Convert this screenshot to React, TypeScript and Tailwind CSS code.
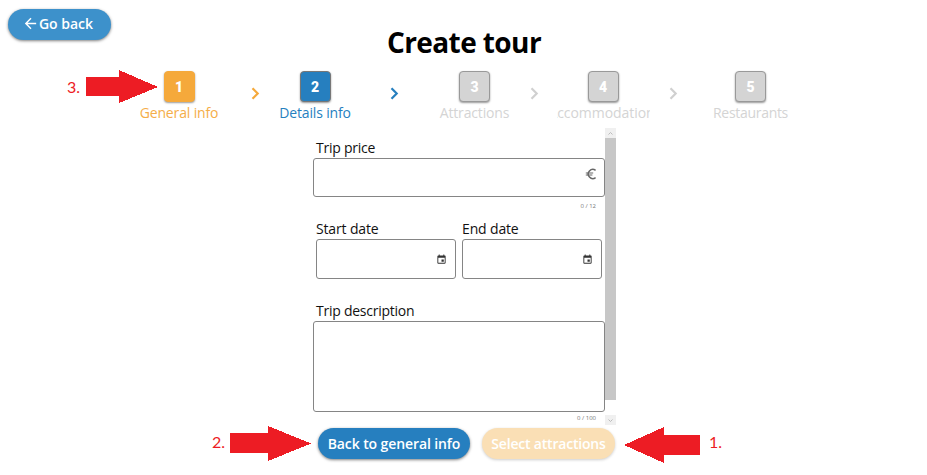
import { MdArrowBack, MdEvent } from "react-icons/md";

function Arrow({ points, className }: { points: string; className: string }) {
  return (
    <svg className={`shrink-0 ${className}`} fill="#ed1c24" shapeRendering="crispEdges">
      <polygon points={points} />
    </svg>
  );
}

function Step({ n, label, box, text, className = "" }: { n: number; label: string; box: string; text: string; className?: string }) {
  return (
    <div className={`flex w-[93px] shrink-0 flex-col items-center overflow-hidden ${className}`}>
      <div className={`mt-px flex h-[31px] w-[31px] shrink-0 items-center justify-center rounded-[4px] border pt-[2px] font-['Roboto',sans-serif] text-[14px] font-black text-white shadow-[0_1px_2px_rgba(0,0,0,0.4)] ${box}`}>
        {n}
      </div>
      <div className={`mt-px h-5 whitespace-nowrap text-[14px] leading-5 ${text}`}>{label}</div>
    </div>
  );
}

function Chevron({ className }: { className: string }) {
  return (
    <svg viewBox="0 0 20 20" fill="none" stroke="currentColor" strokeWidth="2.2" className={`mt-[13px] h-5 w-5 shrink-0 ${className}`}>
      <path d="M7.5 5.2l5.2 5.3-5.2 5.3" />
    </svg>
  );
}

function EuroIcon() {
  return (
    <svg viewBox="0 0 12 12" fill="none" stroke="#666" strokeWidth="1.5" className="h-3 w-3">
      <path d="M10.6 2.3A4.6 4.6 0 1 0 10.6 9.7" />
      <path d="M.8 5h7.4M.8 7h6.6" strokeWidth="1.1" />
    </svg>
  );
}

function DateField({ label }: { label: string }) {
  return (
    <div className="w-[140px]">
      <div className="h-5 text-[14px] leading-5 tracking-[-0.15px]">{label}</div>
      <div className="flex h-10 items-center justify-end rounded-[3px] border border-[#858585] pr-[8px]">
        <MdEvent className="h-[11px] w-[11px] text-[#333]" />
      </div>
    </div>
  );
}

export default function App() {
  return (
    <div className="flex h-[475px] w-[927px] flex-col overflow-hidden bg-white font-['Open_Sans','Noto_Sans',sans-serif] text-[#111]">
      <header className="flex h-[70px] shrink-0 items-start pl-2 pt-[9px]">
        <button className="flex h-[31px] w-[103px] items-center justify-center rounded-full bg-[#3d91cb] pb-[2px] pr-1 text-[14px] font-semibold text-white shadow-[0_1px_3px_rgba(0,0,0,0.5)]">
          <MdArrowBack className="h-[17px] w-[17px]" />
          <span>Go back</span>
        </button>
        <h1 className="ml-[253px] mt-[13px] w-[200px] text-center text-[28px] font-bold leading-10 tracking-[-0.6px] text-black">Create tour</h1>
      </header>

      <div className="flex h-[57px] shrink-0 items-start pl-[67px]">
        <span className="mt-[7px] w-[19px] font-['Lato',sans-serif] text-[16px] leading-5 text-[#ed1c24]">3.</span>
        <Arrow className="h-[34px] w-[72px]" points="0,7 33,7 33,0 72,17 33,33 33,26 0,26" />
        <Step className="-ml-[25.5px]" n={1} label="General info" box="border-[#f5a93b] bg-[#f5a93b]" text="text-[#f5ad48] tracking-[-0.15px]" />
        <Chevron className="ml-[19.5px] text-[#f5a93b]" />
        <Step className="ml-[3.5px]" n={2} label="Details info" box="border-[#777] bg-[#267fbf]" text="text-[#267fbf] tracking-[-0.15px]" />
        <Chevron className="ml-[22.5px] text-[#267fbf]" />
        <Step className="ml-[24px]" n={3} label="Attractions" box="border-[#999] bg-[#d4d4d4]" text="text-[#d4d4d4] tracking-[-0.15px]" />
        <Chevron className="ml-[3px] text-[#d0d0d0]" />
        <Step className="ml-[12.5px]" n={4} label="Accommodation" box="border-[#999] bg-[#d4d4d4]" text="text-[#d4d4d4] -ml-[3px] tracking-[-0.05px]" />
        <Chevron className="ml-[13.5px] text-[#d0d0d0]" />
        <Step className="ml-[21px]" n={5} label="Restaurants" box="border-[#999] bg-[#d4d4d4]" text="text-[#d4d4d4] tracking-[-0.3px]" />
      </div>

      <main className="ml-[313px] flex h-[299px] w-[303px] shrink-0">
        <div className="flex w-[292px] shrink-0 flex-col pt-[11px]">
          <div className="h-5 pl-[3px] text-[14px] leading-5 tracking-[-0.25px]">Trip price</div>
          <div className="flex h-[39px] items-center justify-end rounded-[3px] border border-[#858585] pb-[7px] pr-[7px]">
            <EuroIcon />
          </div>
          <div className="h-[22px] pr-[9px] pt-[3px] text-right text-[6px] leading-[13px] text-[#777]">0 / 12</div>
          <div className="flex gap-[6px] pl-[3px]">
            <DateField label="Start date" />
            <DateField label="End date" />
          </div>
          <div className="mt-[22px] h-5 pl-[3px] text-[14px] leading-5 tracking-[-0.25px]">Trip description</div>
          <div className="h-[91px] rounded-[3px] border border-[#858585]" />
          <div className="pr-[9px] text-right text-[6px] leading-[12px] text-[#777]">0 / 100</div>
        </div>
        <div className="mt-px flex w-[11px] flex-col">
          <div className="flex h-[10px] items-center justify-center bg-[#f0f0f0]">
            <svg className="h-[3px] w-[5px]" viewBox="0 0 5 3" fill="none" stroke="#bbb"><path d="M.5 2.5l2-2 2 2" /></svg>
          </div>
          <div className="h-[262px] bg-[#c7c7c7]" />
          <div className="mt-[15px] flex h-[10px] items-center justify-center bg-[#f0f0f0]">
            <svg className="h-[3px] w-[5px]" viewBox="0 0 5 3" fill="none" stroke="#bbb"><path d="M.5 .5l2 2 2-2" /></svg>
          </div>
        </div>
      </main>

      <footer className="flex h-[49px] shrink-0 items-start pl-[212px]">
        <span className="mt-[6px] w-[18px] font-['Lato',sans-serif] text-[16px] leading-5 text-[#ed1c24]">2.</span>
        <Arrow className="h-[35px] w-[81px]" points="0,7 38,7 38,0 81,17.5 38,35 38,27 0,27" />
        <button className="ml-[7px] mt-[2px] h-[31px] w-[152px] shrink-0 whitespace-nowrap rounded-full bg-[#267fbf] text-[14px] font-semibold tracking-[-0.1px] text-white shadow-[0_1px_3px_rgba(0,0,0,0.5)]">Back to general info</button>
        <button className="ml-3 mt-[2px] h-[31px] w-[133px] shrink-0 whitespace-nowrap rounded-full bg-[#fadfb5] text-[14px] font-semibold tracking-[-0.2px] text-white shadow-[0_1px_3px_rgba(0,0,0,0.2)]">Select attractions</button>
        <Arrow className="ml-[9px] mt-px h-9 w-[76px]" points="0,18 40,0 40,8 76,8 76,28 40,28 40,36" />
        <span className="ml-[9px] mt-[6px] font-['Lato',sans-serif] text-[16px] leading-5 text-[#ed1c24]">1.</span>
      </footer>
    </div>
  );
}
